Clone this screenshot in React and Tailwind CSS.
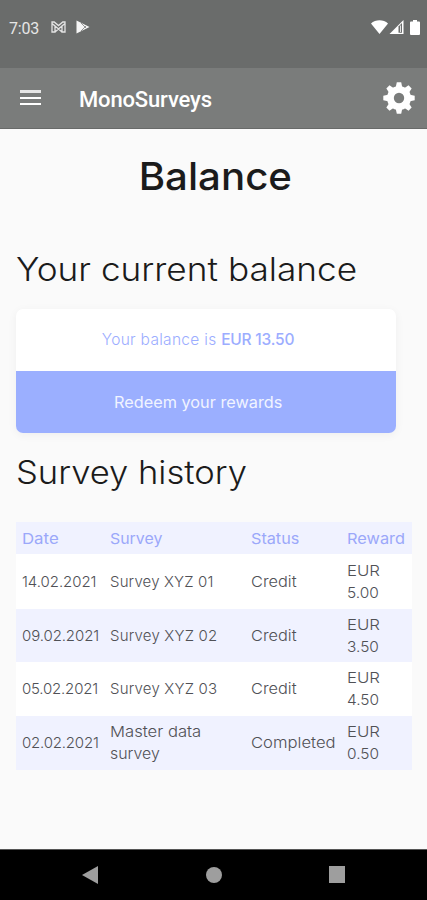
const surveys = [
  { date: '14.02.2021', dateClass: 'tracking-[-0.05px]', name: [['Survey XYZ 01', 'tracking-[0.15px]']], status: ['Credit', 'scale-x-[1.09]'], reward: '5.00', row: 'h-[55px] bg-white' },
  { date: '09.02.2021', dateClass: 'tracking-[-0.1px]', name: [['Survey XYZ 02', 'tracking-[0.2px]']], status: ['Credit', 'scale-x-[1.09]'], reward: '3.50', row: 'h-[53px] bg-[#f0f2ff]' },
  { date: '05.02.2021', dateClass: 'tracking-[-0.2px]', name: [['Survey XYZ 03', 'tracking-[0.2px]']], status: ['Credit', 'scale-x-[1.09]'], reward: '4.50', row: 'h-[54px] bg-white' },
  { date: '02.02.2021', dateClass: 'tracking-[-0.2px]', name: [['Master data', 'scale-x-[1.11]'], ['survey', 'scale-x-[1.06]']], status: ['Completed', 'scale-x-[1.11]'], reward: '0.50', row: 'h-[54px] bg-[#f0f2ff]' },
];

const headings = [
  ['Date', 'scale-x-[1.12]'],
  ['Survey', 'scale-x-[1.06]'],
  ['Status', 'scale-x-[1.08]'],
  ['Reward', 'scale-x-[1.09]'],
];

const columns = 'grid grid-cols-[88px_141px_96px_1fr] items-center pl-[6px]';
const tooth = 'M-3.200-11-2.200-15.700h4.400L3.200-11v22L2.200 15.700h-4.400L-3.200 11z';

function StatusBar() {
  return (
    <div className="flex h-[68px] items-start bg-[#6a6c6b] pl-[9px] pr-[7px] pt-[19px] text-white">
      <span className="w-[42px] font-[Roboto] text-[16px] leading-[20px] tracking-[-0.2px] text-[#e6e6e6]">7:03</span>
      <svg className="mt-[2px] h-[12px] w-[15px]" viewBox="0 0 15 12" fill="none" stroke="#e4e4e4" strokeWidth="1.3">
        <path d="M1 1h2.200l4.300 3.600L11.800 1H14v10h-3V5L7.500 8 4 5v6H1zM4 5 1 2.500M11 5l3-2.500M4 11l3.500-3 3.500 3" />
      </svg>
      <svg className="ml-[10px] mt-[1px] h-[14px] w-[14px]" viewBox="0 0 14 14">
        <path d="M.5.5 13.500 7 .5 13.500z" fill="#f5f5f5" />
        <path d="m5 3 5 5M5 11l5-5" stroke="#6a6c6b" strokeWidth=".7" />
      </svg>
      <div className="ml-auto flex items-start pt-[1px]">
        <svg className="h-[14px] w-[17px]" viewBox="0 0 17 14" fill="white">
          <path d="M0 3.500C4.500-.8 12.500-.8 17 3.500L8.500 14z" />
        </svg>
        <svg className="ml-[1px] h-[14px] w-[15px]" viewBox="0 0 15 14">
          <path d="M.5 14 14.500 0v14z" fill="white" />
          <path d="M9.500 6.500 13 3v9.700H9.500z" fill="#6a6c6b" />
          <path d="M11.500 5.500v6.500" stroke="white" strokeWidth=".8" />
        </svg>
        <svg className="ml-[6px] h-[15px] w-[10px]" viewBox="0 0 10 15" fill="white">
          <path d="M3 0h4v1.500h2q1 0 1 1V14q0 1-1 1H1q-1 0-1-1V2.500q0-1 1-1h2z" />
        </svg>
      </div>
    </div>
  );
}

function AppBar() {
  return (
    <header className="flex h-[61px] items-center border-b border-[#686a69] bg-[#7a7c7b] pl-[20px] pr-[12px] text-white">
      <div className="mb-[1px] flex w-[59px] flex-col gap-[4px]">
        <span className="h-[3px] w-[21px] bg-[#e6e6e6]" />
        <span className="h-[2px] w-[21px] bg-white" />
        <span className="h-[2px] w-[21px] bg-white" />
      </div>
      <h1 className="pt-[4px] font-[Roboto] text-[22px] font-medium leading-[26px] tracking-[-0.15px]">MonoSurveys</h1>
      <svg className="ml-auto h-[32px] w-[32px]" viewBox="-16 -16 32 32">
        <g fill="white">
          <circle r="12" />
          <path d={tooth} />
          <path d={tooth} transform="rotate(45)" />
          <path d={tooth} transform="rotate(90)" />
          <path d={tooth} transform="rotate(135)" />
        </g>
        <circle r="5.200" fill="#7a7c7b" />
      </svg>
    </header>
  );
}

export default function App() {
  return (
    <div className="flex h-[900px] w-[427px] flex-col overflow-hidden bg-[#fafafa] font-[Inter,sans-serif] text-[#1b1b1b]">
      <StatusBar />
      <AppBar />
      <main className="flex-1 px-[16px]">
        <h2 className="pl-[3px] pt-[23px] text-center text-[38.500px] font-medium leading-[48px]"><span className="inline-block scale-x-[1.045]">Balance</span></h2>
        <h3 className="mt-[50px] whitespace-nowrap text-[32px] font-light leading-[40px]"><span className="inline-block origin-left scale-x-[1.1]">Your current balance</span></h3>
        <section className="mt-[19px] flex h-[124px] w-[380px] flex-col overflow-hidden rounded-[7px] bg-white text-center text-[15.500px] shadow-[0_2px_10px_rgba(0,0,0,0.05)]">
          <p className="h-[62px] pr-[16px] font-light leading-[61px] text-[#9cadff]">
            <span className="tracking-[0.3px]">Your balance is </span><span className="font-medium tracking-[-0.2px]">EUR 13.50</span>
          </p>
          <button className="h-[62px] bg-[#9bafff] pr-[16px] leading-[61px] text-[#f1f4ff]"><span className="inline-block scale-x-[1.05]">Redeem your rewards</span></button>
        </section>
        <h3 className="mt-[20px] whitespace-nowrap text-[32px] font-light leading-[40px]"><span className="inline-block origin-left scale-x-[1.08]">Survey history</span></h3>
        <div className="mt-[29px] w-[396px] text-[15px] leading-[22px] text-[#505156]">
          <div className={`${columns} h-[32px] bg-[#f0f2ff] pt-[1px] text-[#9ba8fa]`}>
            {headings.map(([label, width]) => <span key={label} className={`origin-left ${width}`}>{label}</span>)}
          </div>
          {surveys.map((s) => (
            <div key={s.date} className={`${columns} ${s.row} font-light`}>
              <span className={s.dateClass}>{s.date}</span>
              <span>{s.name.map(([line, width]) => <span key={line} className={`block origin-left ${width}`}>{line}</span>)}</span>
              <span className={`origin-left ${s.status[1]}`}>{s.status[0]}</span>
              <span><span className="block origin-left scale-x-[1.12]">EUR</span><span className="block origin-left scale-x-[1.03]">{s.reward}</span></span>
            </div>
          ))}
        </div>
      </main>
      <nav className="flex h-[51px] items-center border-t border-[#555555] bg-black pb-[1px] pl-[82px]">
        <svg className="h-[18px] w-[16px]" viewBox="0 0 16 18"><path d="M0 9 16 0v18z" fill="#9e9e9e" /></svg>
        <span className="ml-[108px] h-[16px] w-[16px] rounded-full bg-[#9e9e9e]" />
        <span className="ml-[107px] h-[17px] w-[16px] bg-[#9e9e9e]" />
      </nav>
    </div>
  );
}
